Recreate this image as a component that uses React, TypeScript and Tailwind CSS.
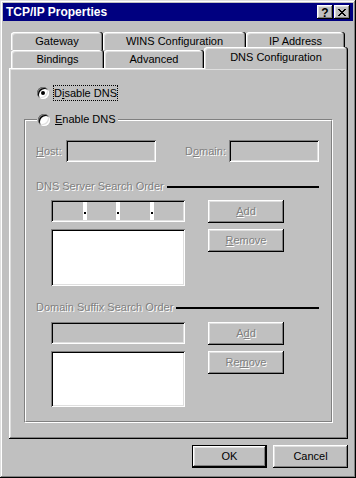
import React from 'react';

const raised = 'shadow-[inset_-1px_-1px_#000,inset_1px_1px_#fff,inset_-2px_-2px_#808080,inset_2px_2px_#dfdfdf]';
const sunken = 'shadow-[inset_1px_1px_#808080,inset_-1px_-1px_#fff,inset_2px_2px_#000,inset_-2px_-2px_#dfdfdf]';
const tabEdge = 'shadow-[inset_-1px_0_#000,inset_-2px_0_#808080,inset_1px_1px_#fff,inset_2px_2px_#dfdfdf]';
const dim = 'text-[#808080] [text-shadow:1px_1px_0_#fff]';

function Radio({ checked }: { checked?: boolean }) {
  return (
    <div className={`w-[12px] h-[12px] rounded-full bg-white flex items-center justify-center shrink-0 ${sunken}`}>
      {checked && <div className="w-[4px] h-[4px] rounded-full bg-black" />}
    </div>
  );
}

function Btn({ children, w = 75, h = 23, disabled, isDefault }: { children: React.ReactNode; w?: number; h?: number; disabled?: boolean; isDefault?: boolean }) {
  const inner = (
    <div className={`w-full h-full flex items-center justify-center bg-[#c0c0c0] ${raised} ${disabled ? dim : 'text-black'}`}>
      {children}
    </div>
  );
  if (isDefault) {
    return (
      <div className="border border-black" style={{ width: w, height: h }}>
        {inner}
      </div>
    );
  }
  return <div style={{ width: w, height: h }}>{inner}</div>;
}

function Tab({ label, w, selected }: { label: string; w: number; selected?: boolean }) {
  if (selected) {
    return (
      <div
        className={`relative z-10 -mb-[1px] h-[22px] pb-[2px] flex items-center justify-center bg-[#c0c0c0] rounded-t-[3px] ${tabEdge}`}
        style={{ width: w }}>
        {label}
      </div>
    );
  }
  return (
    <div
      className={`h-[18px] flex items-center justify-center bg-[#c0c0c0] rounded-t-[3px] ${tabEdge}`}
      style={{ width: w }}>
      {label}
    </div>
  );
}

function SectionHeader({ text }: { text: string }) {
  return (
    <div className="flex items-center h-[13px] w-[283px]">
      <span className={`whitespace-nowrap ${dim}`}>{text}</span>
      <div className="ml-[3px] flex-1 h-[2px] bg-black" />
    </div>
  );
}

function IpField() {
  return (
    <div className={`w-[134px] h-[22px] bg-white p-[2px] flex ${sunken}`}>
      <div className="flex-1 bg-[#c0c0c0]" />
      <div className="w-[4px] flex items-end justify-center pb-[6px]"><div className="w-[2px] h-[2px] bg-black" /></div>
      <div className="flex-1 bg-[#c0c0c0]" />
      <div className="w-[4px] flex items-end justify-center pb-[6px]"><div className="w-[2px] h-[2px] bg-black" /></div>
      <div className="flex-1 bg-[#c0c0c0]" />
      <div className="w-[4px] flex items-end justify-center pb-[6px]"><div className="w-[2px] h-[2px] bg-black" /></div>
      <div className="flex-1 bg-[#c0c0c0]" />
    </div>
  );
}

export default function App() {
  return (
    <div className={`w-[356px] h-[478px] bg-[#c0c0c0] p-[3px] flex flex-col font-['Liberation_Sans',Arial,sans-serif] text-[11px] leading-[13px] text-black select-none shadow-[inset_-1px_-1px_#000,inset_1px_1px_#dfdfdf,inset_-2px_-2px_#808080,inset_2px_2px_#fff]`}>
      {/* Title bar */}
      <div className="h-[18px] bg-[#000080] flex items-center justify-between pl-[3px] pr-[3px]">
        <span className="text-white font-bold text-[12px]">TCP/IP Properties</span>
        <div className="flex gap-[1px]">
          <div className={`w-[16px] h-[14px] bg-[#c0c0c0] flex items-center justify-center font-bold text-[12px] leading-none pt-[1px] ${raised}`}>?</div>
          <div className={`w-[16px] h-[14px] bg-[#c0c0c0] flex items-center justify-center ${raised}`}>
            <svg width="8" height="7" viewBox="0 0 8 7" shapeRendering="crispEdges">
              <path d="M0 0h2v1h-2zM6 0h2v1h-2zM1 1h2v1h-2zM5 1h2v1h-2zM2 2h4v1h-4zM3 3h2v1h-2zM2 4h4v1h-4zM1 5h2v1h-2zM5 5h2v1h-2zM0 6h2v1h-2zM6 6h2v1h-2z" fill="#000" />
            </svg>
          </div>
        </div>
      </div>

      {/* Tabs, back row */}
      <div className="mt-[11px] ml-[8px] flex h-[18px]">
        <Tab label="Gateway" w={92} />
        <Tab label="WINS Configuration" w={143} />
        <Tab label="IP Address" w={99} />
      </div>
      {/* Tabs, front row */}
      <div className="-mt-[3px] ml-[8px] flex items-end h-[21px]">
        <Tab label="Bindings" w={93} />
        <Tab label="Advanced" w={100} />
        <Tab label="DNS Configuration" w={144} selected />
      </div>

      {/* Tab panel */}
      <div className={`ml-[6px] w-[339px] h-[371px] bg-[#c0c0c0] pt-[17px] flex flex-col ${raised}`}>
        <div className="ml-[28px] flex items-center h-[16px]">
          <Radio checked />
          <span className="ml-[4px] border border-dotted border-black px-[0px] h-[16px] flex items-center">
            D<span className="underline">i</span>sable DNS
          </span>
        </div>

        {/* Enable DNS group */}
        <div className="relative mt-[18px] ml-[15px] w-[309px] h-[304px] border-l border-t border-[#808080] border-r-white border-b-white border-r border-b">
          <div className="w-full h-full border-l border-t border-white border-r border-b border-r-[#808080] border-b-[#808080] flex flex-col pl-[10px] pt-[19px]">
            {/* Host / Domain */}
            <div className="flex items-center h-[22px]">
              <span className={`w-[30px] ${dim}`}><span className="underline">H</span>ost:</span>
              <div className={`w-[90px] h-[22px] bg-[#c0c0c0] ${sunken}`} />
              <span className={`ml-[29px] w-[44px] ${dim}`}>D<span className="underline">o</span>main:</span>
              <div className={`w-[90px] h-[22px] bg-[#c0c0c0] ${sunken}`} />
            </div>

            <div className="mt-[18px]">
              <SectionHeader text="DNS Server Search Order" />
            </div>
            <div className="mt-[7px] ml-[15px] flex">
              <div className="w-[134px] flex flex-col gap-[7px]">
                <IpField />
                <div className={`w-[134px] h-[57px] bg-white ${sunken}`} />
              </div>
              <div className="ml-[23px] flex flex-col gap-[6px]">
                <Btn w={76} disabled><span className="underline">A</span>dd</Btn>
                <Btn w={76} disabled><span className="underline">R</span>emove</Btn>
              </div>
            </div>

            <div className="mt-[15px]">
              <SectionHeader text="Domain Suffix Search Order" />
            </div>
            <div className="mt-[8px] ml-[15px] flex">
              <div className="w-[134px] flex flex-col gap-[7px]">
                <div className={`w-[134px] h-[22px] bg-[#c0c0c0] ${sunken}`} />
                <div className={`w-[134px] h-[56px] bg-white ${sunken}`} />
              </div>
              <div className="ml-[23px] flex flex-col gap-[6px]">
                <Btn w={76} disabled>A<span className="underline">d</span>d</Btn>
                <Btn w={76} disabled>Re<span className="underline">m</span>ove</Btn>
              </div>
            </div>
          </div>

          {/* group legend sits on the border */}
          <div className="absolute -top-[7px] left-[12px] flex items-center bg-[#c0c0c0] pl-[1px] pr-[2px] h-[13px]">
            <Radio />
            <span className="ml-[5px]"><span className="underline">E</span>nable DNS</span>
          </div>
        </div>
      </div>

      {/* Dialog buttons */}
      <div className="ml-[6px] w-[339px] mt-[6px] flex justify-end gap-[6px]">
        <Btn isDefault>OK</Btn>
        <Btn>Cancel</Btn>
      </div>
    </div>
  );
}
